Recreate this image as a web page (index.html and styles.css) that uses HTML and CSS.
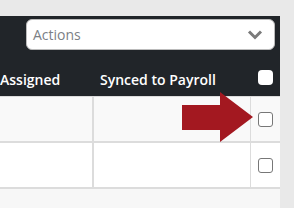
FILE: index.html
```html
<!DOCTYPE html>
<html>
<head>
<meta charset="utf-8">
<link rel="stylesheet" href="styles.css">
</head>
<body>
<div class="panel">
  <div class="toolbar">
    <div class="select">
      <span class="select-label">Actions</span>
      <svg class="chevron" width="16" height="11" viewBox="0 0 16 11"><path d="M2 2.5 L8 8.5 L14 2.5" fill="none" stroke="#7a7a7a" stroke-width="3"/></svg>
    </div>
  </div>
  <div class="thead">
    <div class="cell c1"><span class="th">Assigned</span></div>
    <div class="cell c2"><span class="th">Synced to Payroll</span></div>
    <div class="cell c3"><span class="hbox"></span></div>
  </div>
  <div class="row odd">
    <div class="cell c1"></div>
    <div class="cell c2"></div>
    <div class="cell c3"><span class="box"></span></div>
  </div>
  <div class="row">
    <div class="cell c1"></div>
    <div class="cell c2"></div>
    <div class="cell c3"><span class="box"></span></div>
  </div>
  <div class="foot"></div>
  <svg class="arrow" width="72" height="52" viewBox="0 0 72 52"><polygon points="0,13 38,13 38,0 71,25 38,50 38,38 0,38" fill="#a31820"/></svg>
</div>
</body>
</html>
```
FILE: styles.css
```css
html, body {
  margin: 0;
  padding: 0;
  background: #e9e9e9;
  font-family: "Open Sans", "Liberation Sans", sans-serif;
}
.panel {
  position: relative;
  margin-top: 16px;
  width: 280px;
  height: 192px;
  background: #f7f7f7;
}
.toolbar {
  background: #212529;
  padding: 3px 5px 8px 26px;
}
.select {
  height: 29px;
  background: #fff;
  border: 1px solid #bbb;
  border-radius: 6px;
  display: flex;
  align-items: center;
  justify-content: space-between;
  padding: 0 11px 0 6px;
}
.select-label {
  color: #7b7f86;
  font-size: 14px;
}
.chevron { display: block; }
.thead {
  display: flex;
  height: 38px;
  background: #212529;
  color: #fff;
  font-size: 14px;
  font-weight: 600;
  border-bottom: 1px solid #dcdcdc;
}
.th {
  position: relative;
  top: 2px;
}
.cell {
  display: flex;
  align-items: center;
  box-sizing: border-box;
}
.c1 { width: 92px; }
.c2 { width: 158px; padding-left: 8px; }
.c3 { width: 30px; justify-content: center; }
.thead .c1 { padding-left: 0; width: 93px; }
.thead .c2 { width: 157px; padding-left: 7px; }
.row {
  display: flex;
  height: 46px;
  background: #fff;
  border-bottom: 2px solid #dcdcdc;
  box-sizing: border-box;
}
.row.odd { background: #f9f9f9; }
.row .c2 { border-left: 2px solid #dcdcdc; }
.row .c3 { border-left: 1px solid #dcdcdc; }
.hbox {
  width: 15px;
  height: 15px;
  background: #fff;
  border-radius: 4px;
}
.box {
  width: 15px;
  height: 15px;
  border: 1px solid #777;
  border-radius: 3px;
  background: #fff;
  box-sizing: border-box;
}
.arrow {
  position: absolute;
  left: 182px;
  top: 76px;
}
```
